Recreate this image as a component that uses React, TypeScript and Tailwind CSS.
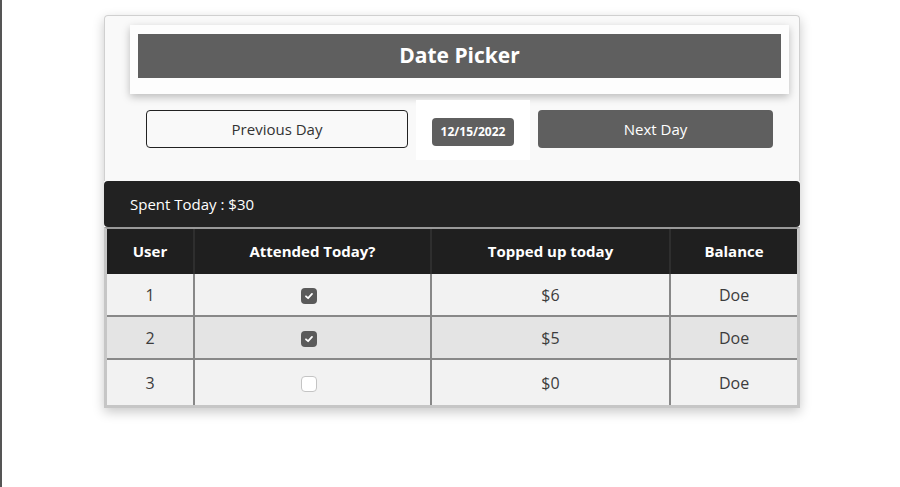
import React from "react";

const font = { fontFamily: '"Open Sans", "Noto Sans", sans-serif' };

function Check({ checked }: { checked: boolean }) {
  if (checked) {
    return (
      <span className="mr-[8px] inline-flex h-[16px] w-[16px] items-center justify-center rounded-[4px] bg-[#5a5a5a] align-middle">
        <svg width="10" height="10" viewBox="0 0 10 10">
          <path d="M2 5.3 L4.1 7.2 L8 2.9" fill="none" stroke="#fff" strokeWidth="1.8" strokeLinecap="round" strokeLinejoin="round" />
        </svg>
      </span>
    );
  }
  return <span className="mr-[8px] inline-block h-[16px] w-[16px] rounded-[4px] border border-[#c4c4c4] bg-white align-middle" />;
}

const rows = [
  { u: "1", a: true, t: "$6", b: "Doe", bg: "bg-[#f2f2f2]", h: "h-[42px]" },
  { u: "2", a: true, t: "$5", b: "Doe", bg: "bg-[#e4e4e4]", h: "h-[43px]" },
  { u: "3", a: false, t: "$0", b: "Doe", bg: "bg-[#f2f2f2]", h: "h-[46px]" },
];

export default function App() {
  return (
    <div className="min-h-[487px] w-[900px] border-l-2 border-[#555] bg-white pt-[15px]" style={font}>
      <div className="ml-[102px] w-[696px] rounded-t-[4px] shadow-[0_4px_12px_rgba(0,0,0,0.22)]">
        <div className="h-[166px] rounded-t-[4px] border border-b-0 border-[#d0d0d0] bg-[#f9f9f9] pt-[9px]">
          <div className="ml-[25px] w-[659px] bg-[#fdfdfd] px-[8px] pb-[16px] pt-[9px] shadow-[0_3px_8px_rgba(0,0,0,0.25)]">
            <div className="flex h-[44px] items-center justify-center bg-[#5f5f5f] text-[21px] font-bold text-white">Date Picker</div>
          </div>
          <div className="mt-[6px] flex items-start pl-[41px]">
            <button className="mt-[10px] h-[38px] w-[262px] rounded-[4px] border border-[#222] bg-transparent text-[15px] text-[#333]">Previous Day</button>
            <div className="ml-[8px] flex h-[60px] w-[114px] justify-center bg-white pt-[18px]">
              <div className="flex h-[28px] w-[82px] items-center justify-center rounded-[4px] bg-[#5f5f5f] text-[12px] font-bold text-white">12/15/2022</div>
            </div>
            <button className="ml-[8px] mt-[10px] h-[38px] w-[235px] rounded-[4px] bg-[#5f5f5f] text-[15px] text-white">Next Day</button>
          </div>
        </div>
        <div className="flex h-[46px] items-center rounded-[4px] bg-[#222] pl-[26px] text-[15px] text-white">Spent Today : $30</div>
        <div className="border-x-[3px] border-b-[3px] border-t-2 border-x-[#c6c6c6] border-b-[#c6c6c6] border-t-[#999]">
          <table className="w-full border-collapse text-[16px]">
            <thead>
              <tr className="h-[45px] bg-[#1f1f1f] text-[15px] text-white">
                <th className="w-[87px] font-bold">User</th>
                <th className="w-[237px] border-l-2 border-[#2e2e2e] font-bold">Attended Today?</th>
                <th className="w-[239px] border-l-2 border-[#2e2e2e] font-bold">Topped up today</th>
                <th className="border-l-2 border-[#2e2e2e] font-bold">Balance</th>
              </tr>
            </thead>
            <tbody>
              {rows.map((r, i) => (
                <tr key={r.u} className={`${r.h} ${r.bg} text-[#3c3c3c] ${i > 0 ? "border-t-2 border-[#888]" : ""}`}>
                  <td className="text-center">{r.u}</td>
                  <td className="border-l-2 border-[#888] text-center"><Check checked={r.a} /></td>
                  <td className="border-l-2 border-[#888] text-center">{r.t}</td>
                  <td className="border-l-2 border-[#888] text-center">{r.b}</td>
                </tr>
              ))}
            </tbody>
          </table>
        </div>
      </div>
    </div>
  );
}
